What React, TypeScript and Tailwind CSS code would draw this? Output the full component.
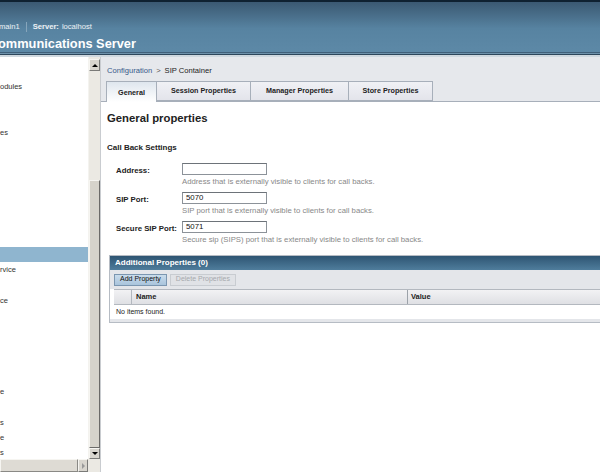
import React from 'react'

const font = "font-['Liberation_Sans',Arial,sans-serif]"

const navRows: { text: string; selected?: boolean }[] = Array.from({ length: 26 }, () => ({ text: '' }))
navRows[0] = { text: 'odules' }
navRows[3] = { text: 'es' }
navRows[11] = { text: '', selected: true }
navRows[12] = { text: 'rvice' }
navRows[14] = { text: 'ce' }
navRows[20] = { text: 'e' }
navRows[22] = { text: 's' }
navRows[23] = { text: 'e' }
navRows[24] = { text: 's' }

function Header() {
  return (
    <div className="relative h-[57px] shrink-0 bg-gradient-to-b from-[#39566f] via-[#5783a1] to-[#5e8aa8]">
      <div className="h-[2px] bg-[#0f2131]" />
      <div className="mt-[20px] flex h-[10px] items-center text-[7.6px] text-white/90">
        <span className="-ml-[1px]">main1</span>
        <span className="mx-[6px] h-[10px] w-px bg-[#86a5bb]" />
        <span className="font-bold">Server:</span>
        <span className="ml-[3px]">localhost</span>
      </div>
      <div className="mt-[4px] -ml-[2px] text-[12.8px] font-semibold leading-[16px] text-white">ommunications Server</div>
      <div className="absolute bottom-0 left-0 right-0">
        <div className="h-px bg-[#40607a]" />
        <div className="h-px bg-[#6e92ab]" />
        <div className="h-px bg-[#2d475c]" />
        <div className="h-[2px] bg-[#cfd8df]" />
      </div>
    </div>
  )
}

function Sidebar() {
  return (
    <div className="flex w-[100px] shrink-0 flex-col bg-white">
      <div className="flex flex-1 overflow-hidden">
        <div className="w-[88px] overflow-hidden pt-[22px] text-[7.5px] text-[#333]">
          {navRows.map((r, i) => (
            <div
              key={i}
              className={`flex h-[15.25px] items-center whitespace-nowrap ${r.selected ? 'bg-[#8fb5cf]' : ''}`}
            >
              {r.text}
            </div>
          ))}
        </div>
        {/* vertical scrollbar */}
        <div className="flex w-[12px] flex-col bg-[#ebe9e3] border-l border-[#f4f3ef]">
          <div className="mt-[2px] flex h-[12px] w-[11px] items-center justify-center border border-[#f6f5f1] border-r-[#7a7a78] border-b-[#7a7a78] bg-[#d8d5ce]">
            <div className="h-0 w-0 border-x-[3px] border-b-[3px] border-x-transparent border-b-black" />
          </div>
          <div className="mt-[109px] flex-1 border border-[#f6f5f1] border-r-[#6b6a68] border-b-[#6b6a68] bg-[#d6d3cb]" />
          <div className="flex h-[11px] w-[11px] items-center justify-center border border-[#f6f5f1] border-r-[#7a7a78] border-b-[#7a7a78] bg-[#d8d5ce]">
            <div className="h-0 w-0 border-x-[3px] border-t-[3px] border-x-transparent border-t-black" />
          </div>
        </div>
      </div>
      {/* horizontal scrollbar */}
      <div className="flex h-[13px] shrink-0">
        <div className="flex w-[88px] bg-[#ebe9e3]">
          <div className="flex-1 border border-[#f6f5f1] border-r-[#8a8985] border-b-[#8a8985] bg-[#dedbd4]" />
          <div className="flex w-[10px] items-center justify-center border border-[#f6f5f1] border-r-[#7a7a78] border-b-[#7a7a78] bg-[#d8d5ce]">
            <div className="h-0 w-0 border-y-[3px] border-l-[3px] border-y-transparent border-l-[#999]" />
          </div>
        </div>
        <div className="w-[12px] bg-[#ebe9e3]" />
      </div>
    </div>
  )
}

function Tab({ label, active, w }: { label: string; active?: boolean; w: string }) {
  return (
    <div
      className={`flex h-[20px] items-center justify-center border border-[#a7afba] text-[7.2px] font-bold text-[#222] ${w} ${
        active
          ? 'relative -mb-px h-[21px] border-b-0 bg-gradient-to-b from-[#dfe6ee] to-white'
          : 'bg-gradient-to-b from-[#f0f1f5] to-[#e3e4eb] -ml-px'
      }`}
    >
      <span className={active ? 'mt-[3px]' : ''}>{label}</span>
    </div>
  )
}

function Field({ label, value, help }: { label: string; value: string; help: string }) {
  return (
    <div className="flex">
      <div className="w-[75px] pl-[9px] pt-[2px] text-[7.8px] font-bold text-[#222] whitespace-nowrap">{label}</div>
      <div>
        <div className="flex h-[12px] w-[85px] items-center border border-[#8c9299] border-t-[#6d7379] bg-white pl-[3px] text-[7.8px] text-[#111]">
          {value}
        </div>
        <div className="mt-[3px] whitespace-nowrap text-[7.75px] leading-[8px] text-[#888]">{help}</div>
      </div>
    </div>
  )
}

function PropertiesTable() {
  return (
    <div className="ml-[2px] mr-[-10px] mt-[11px] border border-[#b6bcc4] bg-white">
      <div className="flex h-[14px] items-center bg-gradient-to-b from-[#2e5573] to-[#4f7d9c] pl-[5px] text-[8px] font-bold text-white">
        Additional Properties (0)
      </div>
      <div className="flex h-[19px] items-center gap-[3px] bg-[#e4e6ea] pl-[4px]">
        <div className="flex h-[12px] items-center border border-[#7b96b0] bg-gradient-to-b from-[#c9dcec] to-[#a9c4dc] px-[5px] text-[7px] text-[#111]">
          Add Property
        </div>
        <div className="flex h-[12px] items-center border border-[#c8ccd1] bg-[#e0e2e6] px-[5px] text-[7px] text-[#a6a9ad]">
          Delete Properties
        </div>
      </div>
      <div className="mx-[4px] flex h-[16px] border-y border-[#b3b8bf] bg-gradient-to-b from-[#f2f2f4] to-[#dfe0e4] text-[7.5px] font-bold text-[#222]">
        <div className="w-[18px] border-r border-[#b3b8bf]" />
        <div className="flex w-[276px] items-center border-r border-[#9ca2a9] pl-[4px]">Name</div>
        <div className="flex flex-1 items-center pl-[3px]">Value</div>
      </div>
      <div className="flex h-[14px] items-center pl-[6px] text-[7px] text-[#222]">No items found.</div>
      <div className="h-[3px] bg-[#e4e6ea]" />
    </div>
  )
}

function Content() {
  return (
    <div className="flex flex-1 flex-col bg-white">
      <div className="border-b border-[#a7afba] bg-[#e6e8ec]">
        <div className="flex h-[24px] items-end pb-[5px] pl-[6px] text-[7.6px]">
          <span className="text-[#36598a]">Configuration</span>
          <span className="mx-[4px] text-[#555]">&gt;</span>
          <span className="text-[#222]">SIP Container</span>
        </div>
        <div className="flex pl-[5px]">
          <Tab label="General" active w="w-[51px]" />
          <Tab label="Session Properties" w="w-[95px]" />
          <Tab label="Manager Properties" w="w-[99px]" />
          <Tab label="Store Properties" w="w-[85px]" />
        </div>
      </div>
      <div className="pl-[6px]">
        <div className="mt-[9px] text-[11.3px] font-bold leading-[14px] text-[#222]">General properties</div>
        <div className="mt-[18px] text-[8px] font-bold leading-[10px] text-[#222]">Call Back Settings</div>
        <div className="mt-[10px] flex flex-col gap-[6px]">
          <Field label="Address:" value="" help="Address that is externally visible to clients for call backs." />
          <Field label="SIP Port:" value="5070" help="SIP port that is externally visible to clients for call backs." />
          <Field
            label="Secure SIP Port:"
            value="5071"
            help="Secure sip (SIPS) port that is externally visible to clients for call backs."
          />
        </div>
        <PropertiesTable />
      </div>
    </div>
  )
}

export default function App() {
  return (
    <div className={`flex h-[472px] w-[600px] flex-col overflow-hidden bg-white ${font}`}>
      <Header />
      <div className="flex flex-1 overflow-hidden">
        <Sidebar />
        <div className="w-px bg-[#c9ccd0]" />
        <Content />
      </div>
    </div>
  )
}
